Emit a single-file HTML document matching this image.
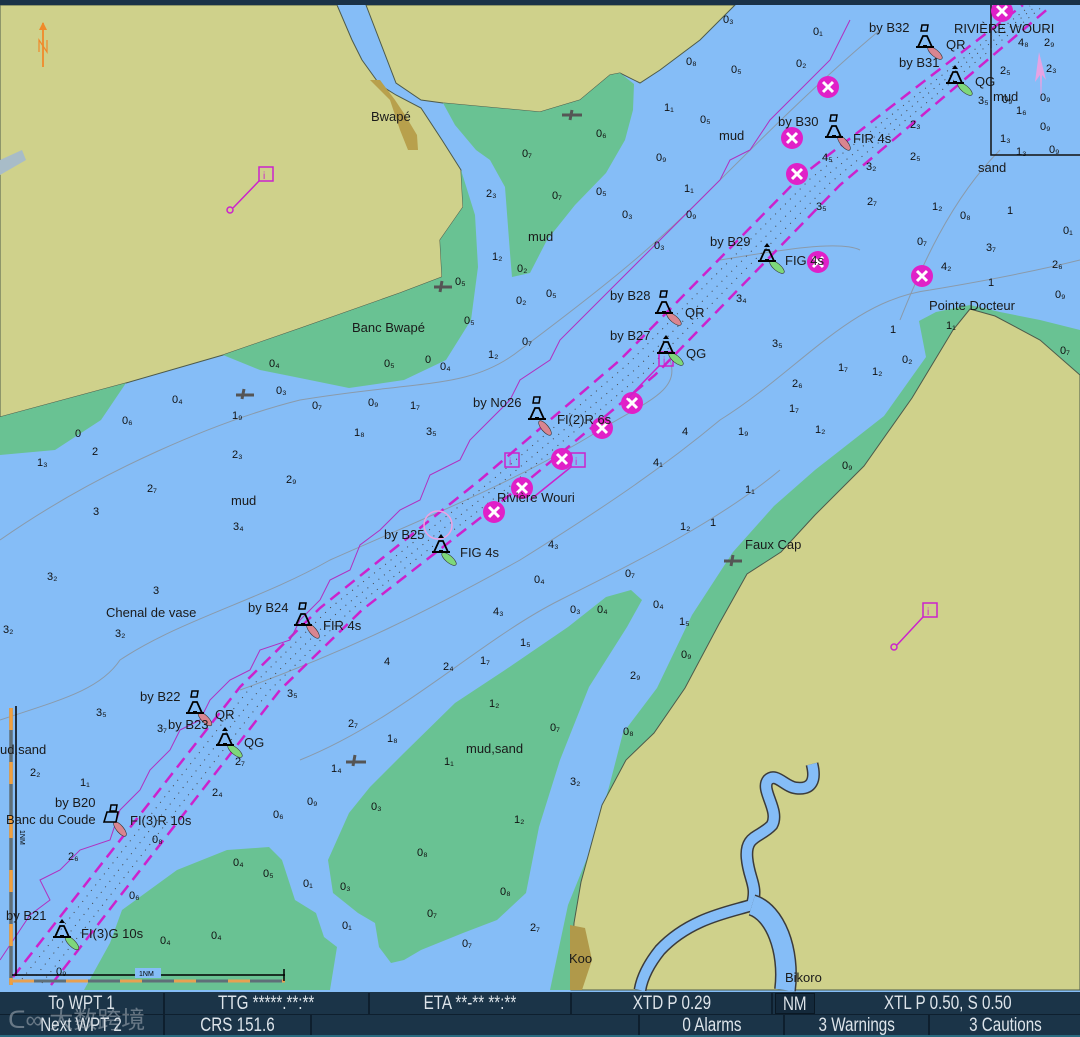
<!DOCTYPE html>
<html><head><meta charset="utf-8"><style>
html,body{margin:0;padding:0;width:1080px;height:1037px;overflow:hidden;background:#85bdf7}
svg{display:block}
.d{font:11px "Liberation Sans",sans-serif;fill:#111}
.l{font:13px "Liberation Sans",sans-serif;fill:#1a1a1a}
#bar{position:absolute;left:0;top:992px;width:1080px;height:45px;background:#1b3448;font-family:"Liberation Sans",sans-serif;color:#dde4ea}
.c{position:absolute;height:21px;line-height:22px;font-size:19px;text-align:center;border-right:2px solid #0e1f2e;box-sizing:border-box;overflow:hidden;white-space:nowrap}
.c span{display:inline-block;transform:scaleX(.8)}
</style></head><body>
<svg width="1080" height="1037" viewBox="0 0 1080 1037" xmlns="http://www.w3.org/2000/svg">
<defs>
<g id="bell"><path d="M-7,5 L-2,-6 L2,-6 L7,5 Z" fill="none" stroke="#000" stroke-width="1.8"/><line x1="-9" y1="5" x2="9" y2="5" stroke="#000" stroke-width="2"/><rect x="-2" y="3" width="4" height="3" fill="#000"/></g>
<g id="topr"><path d="M-3,-17 L3,-17 L2,-11 L-4,-11 Z" fill="none" stroke="#000" stroke-width="1.5"/></g>
<g id="topg"><path d="M0,-13 L3,-9 L-3,-9Z" fill="#000"/></g>
<g id="wr"><circle r="11" fill="#e020c8"/><path d="M-5,-5 L5,5 M5,-5 L-5,5" stroke="#fff" stroke-width="3"/></g>
</defs>
<rect width="1080" height="1037" fill="#85bdf7"/>
<path d="M0,5 L337,5 L352,40 L362,60 L380,85 L396,95 L421,108 L442,140 L461,170 L463,207 L440,240 L442,277 L400,293 L301,328 L223,355 L126,383 L0,417 Z" fill="#cfd18b" stroke="#4d5a4a" stroke-width="1"/>
<path d="M461,170 L463,207 L440,240 L442,277 L400,293 L301,328 L223,355 L260,370 L295,377 L349,388 L404,380 L446,360 L471,320 L478,267 L475,215 Z" fill="#69c293"/>
<path d="M126,383 L0,417 L0,455 L55,450 L101,420 Z" fill="#69c293"/>
<path d="M366,5 L735,5 L700,40 L660,70 L640,83 L620,73 L610,75 L580,100 L540,112 L443,103 L421,100 L396,83 Z" fill="#cfd18b" stroke="#4d5a4a" stroke-width="1"/>
<path d="M443,103 L540,112 L580,100 L610,75 L620,73 L634,84 L633,110 L625,140 L606,173 L575,205 L547,240 L530,273 L512,277 L510,253 L505,187 L490,160 L476,150 L455,125 Z" fill="#69c293"/>
<path d="M370,80 L390,100 L400,130 L408,150 L418,150 L417,135 L405,115 L395,100 L380,80 Z" fill="#b8a04c"/>
<path d="M0,160 L22,150 L26,160 L0,175 Z" fill="#a8bcc8"/>
<path d="M1080,352 L1080,990 L550,990 L568,905 L592,846 L609,787 L623,733 L657,688 L692,615 L733,552 L774,506 L815,470 L884,416 L926,357 L919,321 L936,312 L970,305 L1000,312 L1040,320 L1080,330 Z" fill="#69c293"/>
<path d="M970,309 L995,316 L1040,340 L1080,375 L1080,990 L571,990 L574,923 L581,882 L602,805 L626,760 L654,733 L685,688 L719,624 L747,574 L781,552 L815,515 L864,466 L912,398 L953,330 Z" fill="#cfd18b" stroke="#4d5a4a" stroke-width="1"/>
<path d="M570,925 L585,928 L592,960 L582,990 L570,990 Z" fill="#b0994a"/>
<path d="M812,764 C816,780 812,790 796,788 C785,787 776,772 768,780 C760,790 780,810 772,825 C760,838 745,835 747,858 C749,880 758,885 752,905 C730,912 690,918 660,950 C648,965 642,978 640,990" fill="none" stroke="#3b3b3b" stroke-width="13"/>
<path d="M812,764 C816,780 812,790 796,788 C785,787 776,772 768,780 C760,790 780,810 772,825 C760,838 745,835 747,858 C749,880 758,885 752,905 C730,912 690,918 660,950 C648,965 642,978 640,990" fill="none" stroke="#85bdf7" stroke-width="10"/>
<path d="M752,905 C775,912 790,950 785,990" fill="none" stroke="#3b3b3b" stroke-width="22"/>
<path d="M752,905 C775,912 790,950 785,990" fill="none" stroke="#85bdf7" stroke-width="19"/>
<path d="M631,590 L642,600 L627,627 L589,687 L560,760 L539,827 L526,893 L497,920 L463,933 L421,950 L404,960 L391,963 L379,947 L375,923 L358,913 L333,893 L328,860 L349,813 L370,787 L404,753 L455,703 L505,670 L568,627 L606,597 Z" fill="#69c293"/>
<path d="M84,990 L110,943 L122,910 L177,870 L227,850 L269,847 L282,860 L295,900 L316,913 L324,937 L337,947 L330,990 Z" fill="#69c293"/>
<g fill="none" stroke="#8a9aaa" stroke-width="1">
<path d="M0,540 C100,470 220,420 300,400 C420,380 470,390 520,350 C600,290 650,250 700,200 C760,140 820,80 880,30"/>
<path d="M0,720 C60,700 100,690 120,660 C180,620 260,600 330,560 C420,520 520,480 600,430 C650,400 680,390 670,360"/>
<path d="M240,690 C350,650 430,610 520,560 C600,510 660,470 720,420 C800,370 850,300 930,290 C990,280 1040,270 1080,260"/>
<path d="M300,760 C400,720 480,640 560,600 C640,560 720,520 780,470"/>
<path d="M1000,150 C950,200 920,270 900,320"/>
<path d="M720,260 C780,250 840,240 860,250"/>
</g>
<path d="M991,0 L991,155 L1080,155" fill="none" stroke="#111" stroke-width="1.5"/>
<g fill="none" stroke="#cc22cc" stroke-width="2.5" stroke-dasharray="12,7">
<path d="M13,977 L240,687 L320,608 L480,480 L620,360 L800,177 L1023,5"/>
<path d="M51,985 L280,690 L362,610 L520,487 L655,375 L840,185 L1050,7"/>
</g>
<g fill="none" stroke="#444" stroke-width="1" stroke-dasharray="1,6">
<path d="M32,981 L260,689 L341,609 L500,484 L637,368 L820,181 L1036,6"/>
<path d="M22,979 L250,688 L330,608 L490,482 L628,364 L810,179 L1030,6"/>
<path d="M42,983 L270,690 L351,610 L510,486 L646,371 L830,183 L1043,6"/>
</g>
<g fill="none" stroke="#b030c0" stroke-width="1">
<path d="M0,960 L20,930 L30,915 L50,900 L40,880 L60,870 L80,850 L110,840 L120,810 L140,790 L150,770 L170,750 L180,730 L200,720 L210,700 L230,680 L250,670 L260,650 L290,640 L300,620 L320,600 L330,580 L350,570 L360,545 L380,530 L400,510 L420,500 L430,475 L460,460 L470,440 L490,420 L510,400 L520,380 L550,360 L560,340 L580,320 L600,300 L620,280 L640,260 L660,240 L680,220 L700,200 L720,180 L730,160 L750,150 L770,120 L790,100 L810,80 L830,60 L840,40 L850,20"/>
</g>
<use href="#wr" x="828" y="87"/><use href="#wr" x="792" y="138"/><use href="#wr" x="797" y="174"/><use href="#wr" x="818" y="262"/><use href="#wr" x="922" y="276"/><use href="#wr" x="632" y="403"/><use href="#wr" x="602" y="428"/><use href="#wr" x="562" y="459"/><use href="#wr" x="522" y="488"/><use href="#wr" x="494" y="512"/><use href="#wr" x="1002" y="11"/>
<g fill="none" stroke="#cc22cc" stroke-width="1.5">
<rect x="259" y="167" width="14" height="14"/><path d="M259,181 L233,208"/><circle cx="230" cy="210" r="3"/>
<rect x="923" y="603" width="14" height="14"/><path d="M923,617 L897,645"/><circle cx="894" cy="647" r="3"/>
<rect x="505" y="453" width="14" height="14"/>
<rect x="571" y="453" width="14" height="14"/><path d="M571,467 L530,500"/>
<rect x="659" y="352" width="14" height="14"/><path d="M659,366 L628,398"/>
</g>
<g font-family="Liberation Sans,sans-serif" font-size="10" fill="#cc22cc"><text x="263" y="179">i</text><text x="927" y="615">i</text><text x="509" y="465">i</text><text x="575" y="465">i</text><text x="663" y="364">i</text></g>
<g>
<g transform="translate(925,42)"><ellipse cx="10" cy="11" rx="9" ry="3.5" transform="rotate(40 10 11)" fill="#d98590" stroke="#333" stroke-width=".6"/><use href="#bell"/><use href="#topr"/></g>
<g transform="translate(955,78)"><ellipse cx="10" cy="11" rx="9" ry="3.5" transform="rotate(40 10 11)" fill="#7ed87a" stroke="#333" stroke-width=".6"/><use href="#bell"/><use href="#topg"/></g>
<g transform="translate(834,132)"><ellipse cx="10" cy="11" rx="9" ry="3.5" transform="rotate(50 10 11)" fill="#d98590" stroke="#333" stroke-width=".6"/><use href="#bell"/><use href="#topr"/></g>
<g transform="translate(767,256)"><ellipse cx="10" cy="11" rx="9" ry="3.5" transform="rotate(40 10 11)" fill="#7ed87a" stroke="#333" stroke-width=".6"/><use href="#bell"/><use href="#topg"/></g>
<g transform="translate(664,308)"><ellipse cx="10" cy="11" rx="9" ry="3.5" transform="rotate(40 10 11)" fill="#d98590" stroke="#333" stroke-width=".6"/><use href="#bell"/><use href="#topr"/></g>
<g transform="translate(666,348)"><ellipse cx="10" cy="11" rx="9" ry="3.5" transform="rotate(40 10 11)" fill="#7ed87a" stroke="#333" stroke-width=".6"/><use href="#bell"/><use href="#topg"/></g>
<g transform="translate(537,414)"><ellipse cx="8" cy="14" rx="9" ry="3.5" transform="rotate(50 8 14)" fill="#d98590" stroke="#333" stroke-width=".6"/><use href="#bell"/><use href="#topr"/></g>
<circle cx="438" cy="525" r="14" fill="none" stroke="#f0a0e0" stroke-width="1.5"/>
<g transform="translate(441,547)"><ellipse cx="8" cy="12" rx="9" ry="3.5" transform="rotate(40 8 12)" fill="#7ed87a" stroke="#333" stroke-width=".6"/><use href="#bell"/><use href="#topg"/></g>
<g transform="translate(303,620)"><ellipse cx="10" cy="11" rx="9" ry="3.5" transform="rotate(50 10 11)" fill="#d98590" stroke="#333" stroke-width=".6"/><use href="#bell"/><use href="#topr"/></g>
<g transform="translate(195,708)"><ellipse cx="10" cy="11" rx="9" ry="3.5" transform="rotate(45 10 11)" fill="#d98590" stroke="#333" stroke-width=".6"/><use href="#bell"/><use href="#topr"/></g>
<g transform="translate(225,740)"><ellipse cx="10" cy="11" rx="9" ry="3.5" transform="rotate(40 10 11)" fill="#7ed87a" stroke="#333" stroke-width=".6"/><use href="#bell"/><use href="#topg"/></g>
<g transform="translate(110,818)"><ellipse cx="10" cy="11" rx="9" ry="3.5" transform="rotate(50 10 11)" fill="#d98590" stroke="#333" stroke-width=".6"/><path d="M-6,4 L-3,-6 L8,-6 L6,4Z" fill="none" stroke="#000" stroke-width="1.6"/><use href="#topr" x="4" y="4"/></g>
<g transform="translate(62,932)"><ellipse cx="10" cy="11" rx="9" ry="3.5" transform="rotate(45 10 11)" fill="#7ed87a" stroke="#333" stroke-width=".6"/><use href="#bell"/><use href="#topg"/></g>
</g>
<g fill="#555"><path d="M562,115 L582,115 M572,110 L570,120" stroke="#555" stroke-width="3"/><path d="M434,287 L452,287 M442,281 L440,292" stroke="#555" stroke-width="3"/><path d="M236,395 L254,395 M244,389 L242,399" stroke="#555" stroke-width="3"/><path d="M346,762 L366,762 M355,755 L353,766" stroke="#555" stroke-width="3"/><path d="M724,561 L742,561 M733,555 L731,566" stroke="#555" stroke-width="3"/></g>
<path d="M43,67 L43,23" stroke="#f08a2a" stroke-width="1.8"/><path d="M39,30 L43,22 L47,30Z" fill="#f08a2a"/><path d="M39,52 L39,40 L47,52 L47,40" fill="none" stroke="#f08a2a" stroke-width="1.2"/>
<path d="M1039,52 L1035,82 L1040,75 L1041,105 L1042,75 L1046,80Z" fill="#f0a0e0" opacity=".9"/>
<g>
<line x1="11" y1="708" x2="11" y2="985" stroke="#5f6f78" stroke-width="3.5"/>
<line x1="11" y1="708" x2="11" y2="985" stroke="#f0a040" stroke-width="3.5" stroke-dasharray="22,32"/>
<line x1="16" y1="706" x2="16" y2="976" stroke="#000" stroke-width="1.5"/>
<line x1="12" y1="975" x2="285" y2="975" stroke="#000" stroke-width="1.5"/>
<line x1="12" y1="981" x2="285" y2="981" stroke="#5f6f78" stroke-width="3"/>
<line x1="12" y1="981" x2="285" y2="981" stroke="#e8a050" stroke-width="3" stroke-dasharray="22,32"/>
<line x1="284" y1="969" x2="284" y2="981" stroke="#000" stroke-width="1.5"/>
<rect x="135" y="968" width="26" height="10" fill="#85bdf7"/><text x="139" y="976" font-family="Liberation Sans,sans-serif" font-size="7" fill="#000">1NM</text>
<text x="20" y="830" font-family="Liberation Sans,sans-serif" font-size="7" fill="#000" transform="rotate(90 20 830)">1NM</text>
</g>
<g class="l">
<text x="371" y="121">Bwapé</text><text x="352" y="332">Banc Bwapé</text><text x="528" y="241">mud</text><text x="719" y="140">mud</text>
<text x="869" y="32">by B32</text><text x="946" y="49">QR</text><text x="954" y="33">RIVIÈRE WOURI</text><text x="899" y="67">by B31</text><text x="975" y="86">QG</text><text x="993" y="101">mud</text><text x="978" y="172">sand</text>
<text x="778" y="126">by B30</text><text x="853" y="143">FIR 4s</text><text x="710" y="246">by B29</text><text x="785" y="265">FIG 4s</text>
<text x="610" y="300">by B28</text><text x="685" y="317">QR</text><text x="610" y="340">by B27</text><text x="686" y="358">QG</text>
<text x="929" y="310">Pointe Docteur</text><text x="473" y="407">by No26</text><text x="557" y="424">FI(2)R 6s</text><text x="497" y="502">Rivière Wouri</text>
<text x="384" y="539">by B25</text><text x="460" y="557">FIG 4s</text><text x="745" y="549">Faux Cap</text><text x="231" y="505">mud</text>
<text x="106" y="617">Chenal de vase</text><text x="248" y="612">by B24</text><text x="323" y="630">FIR 4s</text>
<text x="140" y="701">by B22</text><text x="215" y="719">QR</text><text x="168" y="729">by B23</text><text x="244" y="747">QG</text>
<text x="0" y="754">ud,sand</text><text x="466" y="753">mud,sand</text>
<text x="55" y="807">by B20</text><text x="6" y="824">Banc du Coude</text><text x="130" y="825">FI(3)R 10s</text>
<text x="6" y="920">by B21</text><text x="81" y="938">FI(3)G 10s</text><text x="569" y="963">Koo</text><text x="785" y="982">Bikoro</text>
</g>
<g class="d">
<text x="723" y="23">0₃</text><text x="813" y="35">0₁</text><text x="686" y="65">0₈</text><text x="731" y="73">0₅</text><text x="796" y="67">0₂</text><text x="596" y="137">0₆</text><text x="664" y="111">1₁</text><text x="700" y="123">0₅</text>
<text x="522" y="157">0₇</text><text x="552" y="199">0₇</text><text x="596" y="195">0₅</text><text x="622" y="218">0₃</text><text x="656" y="161">0₉</text><text x="684" y="192">1₁</text><text x="686" y="218">0₉</text><text x="654" y="249">0₃</text>
<text x="486" y="197">2₃</text><text x="492" y="260">1₂</text><text x="517" y="272">0₂</text><text x="455" y="285">0₅</text><text x="516" y="304">0₂</text><text x="546" y="297">0₅</text><text x="464" y="324">0₅</text><text x="488" y="358">1₂</text><text x="522" y="345">0₇</text><text x="440" y="370">0₄</text><text x="425" y="363">0</text>
<text x="269" y="367">0₄</text><text x="384" y="367">0₅</text><text x="276" y="394">0₃</text><text x="172" y="403">0₄</text><text x="122" y="424">0₆</text><text x="232" y="419">1₉</text><text x="312" y="409">0₇</text><text x="368" y="406">0₉</text><text x="410" y="409">1₇</text><text x="354" y="436">1₈</text><text x="426" y="435">3₅</text><text x="75" y="437">0</text><text x="92" y="455">2</text><text x="37" y="466">1₃</text><text x="232" y="458">2₃</text>
<text x="147" y="492">2₇</text><text x="286" y="483">2₉</text><text x="93" y="515">3</text><text x="233" y="530">3₄</text><text x="47" y="580">3₂</text><text x="153" y="594">3</text><text x="115" y="637">3₂</text><text x="3" y="633">3₂</text><text x="96" y="716">3₅</text><text x="157" y="732">3₇</text><text x="287" y="697">3₅</text><text x="235" y="765">2₇</text>
<text x="30" y="776">2₂</text><text x="80" y="786">1₁</text><text x="307" y="805">0₉</text><text x="212" y="796">2₄</text><text x="273" y="818">0₆</text><text x="152" y="843">0₈</text><text x="68" y="860">2₆</text><text x="129" y="899">0₆</text><text x="56" y="975">0₉</text>
<text x="384" y="665">4</text><text x="348" y="727">2₇</text><text x="387" y="742">1₈</text><text x="331" y="772">1₄</text><text x="443" y="670">2₄</text><text x="480" y="664">1₇</text><text x="493" y="615">4₃</text><text x="520" y="646">1₅</text><text x="444" y="765">1₁</text>
<text x="570" y="613">0₃</text><text x="597" y="613">0₄</text><text x="548" y="548">4₃</text><text x="534" y="583">0₄</text><text x="625" y="577">0₇</text><text x="653" y="608">0₄</text><text x="679" y="625">1₅</text><text x="630" y="679">2₉</text><text x="681" y="658">0₉</text><text x="570" y="785">3₂</text><text x="623" y="735">0₈</text><text x="550" y="731">0₇</text>
<text x="489" y="707">1₂</text><text x="514" y="823">1₂</text><text x="371" y="810">0₃</text><text x="417" y="856">0₈</text><text x="500" y="895">0₈</text><text x="427" y="917">0₇</text><text x="340" y="890">0₃</text><text x="342" y="929">0₁</text><text x="530" y="931">2₇</text><text x="462" y="947">0₇</text><text x="303" y="887">0₁</text><text x="233" y="866">0₄</text><text x="263" y="877">0₅</text><text x="160" y="944">0₄</text><text x="211" y="939">0₄</text>
<text x="653" y="466">4₁</text><text x="682" y="435">4</text><text x="745" y="493">1₁</text><text x="680" y="530">1₂</text><text x="710" y="526">1</text><text x="738" y="435">1₉</text><text x="789" y="412">1₇</text><text x="815" y="433">1₂</text><text x="842" y="469">0₉</text><text x="792" y="387">2₆</text><text x="772" y="347">3₅</text>
<text x="736" y="302">3₄</text><text x="838" y="371">1₇</text><text x="872" y="375">1₂</text><text x="902" y="363">0₂</text><text x="890" y="333">1</text><text x="822" y="161">4₅</text><text x="816" y="210">3₅</text><text x="866" y="170">3₂</text><text x="867" y="205">2₇</text><text x="910" y="128">2₃</text><text x="910" y="160">2₅</text><text x="932" y="210">1₂</text><text x="960" y="219">0₈</text><text x="1007" y="214">1</text><text x="1063" y="234">0₁</text>
<text x="917" y="245">0₇</text><text x="941" y="270">4₂</text><text x="986" y="251">3₇</text><text x="1052" y="268">2₆</text><text x="988" y="286">1</text><text x="1055" y="298">0₉</text><text x="1060" y="354">0₇</text><text x="946" y="329">1₁</text>
<text x="1000" y="74">2₅</text><text x="1046" y="72">2₃</text><text x="1040" y="101">0₉</text><text x="1002" y="103">0₉</text><text x="1040" y="130">0₉</text><text x="1000" y="142">1₃</text><text x="1016" y="155">1₃</text><text x="1049" y="153">0₉</text><text x="1016" y="114">1₆</text><text x="1018" y="46">4₈</text><text x="1044" y="46">2₉</text><text x="978" y="104">3₅</text>
</g>
</svg>
<div id="bar">
<div class="c" style="left:0;top:1px;width:165px"><span>To WPT 1</span></div>
<div class="c" style="left:165px;top:1px;width:205px"><span>TTG *****.**:**</span></div>
<div class="c" style="left:370px;top:1px;width:202px"><span>ETA **-** **:**</span></div>
<div class="c" style="left:572px;top:1px;width:201px"><span>XTD P 0.29</span></div>
<div class="c" style="left:775px;top:1px;width:40px;border:1px solid #0a1824;background:#14293b"><span>NM</span></div>
<div class="c" style="left:815px;top:1px;width:265px;border-right:0"><span>XTL P 0.50, S 0.50</span></div>
<div style="position:absolute;left:0;top:22px;width:1080px;height:1px;background:#0e1f2e"></div>
<div class="c" style="left:0;top:23px;width:165px"><span>Next WPT 2</span></div>
<div class="c" style="left:165px;top:23px;width:147px"><span>CRS 151.6</span></div>
<div class="c" style="left:312px;top:23px;width:328px"><span></span></div>
<div class="c" style="left:640px;top:23px;width:145px"><span>0 Alarms</span></div>
<div class="c" style="left:785px;top:23px;width:145px"><span>3 Warnings</span></div>
<div class="c" style="left:930px;top:23px;width:150px;border-right:0"><span>3 Cautions</span></div>
<div style="position:absolute;left:8px;top:8px;font-size:24px;color:rgba(200,205,210,.45);font-family:'Liberation Sans','Noto Sans CJK SC',sans-serif;white-space:nowrap">ᑕ∞ 大数跨境</div>
<div style="position:absolute;left:0;top:43px;width:1080px;height:2px;background:#2a6a80"></div>
</div>
<div style="position:absolute;left:0;top:0;width:1080px;height:5px;background:#1a3248"></div>
</body></html>
